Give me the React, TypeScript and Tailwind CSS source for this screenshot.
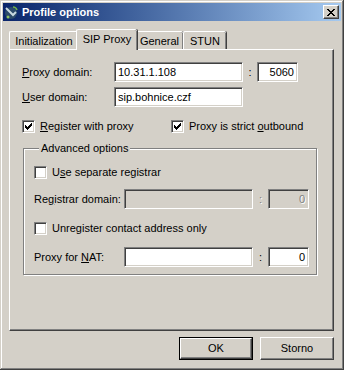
import React from "react";

const sunken =
  "border border-t-[#808080] border-l-[#808080] border-b-white border-r-white shadow-[inset_1px_1px_#404040,inset_-1px_-1px_#d4d0c8]";
const raised =
  "border border-t-white border-l-white border-b-[#404040] border-r-[#404040] shadow-[inset_-1px_-1px_#808080]";

const Check = ({ checked }: { checked: boolean }) => (
  <div className={`w-[13px] h-[13px] shrink-0 bg-white flex items-center justify-center ${sunken}`}>
    {checked && (
      <svg width="7" height="7" viewBox="0 0 7 7" shapeRendering="crispEdges">
        <path d="M0 2h1v3h-1zM1 3h1v3h-1zM2 4h1v3h-1zM3 3h1v3h-1zM4 2h1v3h-1zM5 1h1v3h-1zM6 0h1v3h-1z" fill="#000" />
      </svg>
    )}
  </div>
);

const Field = ({ value, w, right, disabled }: { value: string; w: string; right?: boolean; disabled?: boolean }) => (
  <div
    className={`${w} h-[20px] flex items-center px-[3px] ${sunken} ${disabled ? "bg-[#d4d0c8] text-[#808080] [text-shadow:1px_1px_0_#fff]" : "bg-white"} ${
      right ? "justify-end" : ""
    }`}
  >
    {value}
  </div>
);

const Colon = ({ w, disabled }: { w: string; disabled?: boolean }) => (
  <div className={`${w} text-center ${disabled ? "text-[#808080] [text-shadow:1px_1px_0_#fff]" : ""}`}>:</div>
);

const TitleIcon = () => (
  <svg width="16" height="16" viewBox="0 0 16 16">
    <circle cx="7" cy="9" r="6" fill="#2c4a6a" />
    <path d="M2 4 L9 11 L12 8" stroke="#c8d8e0" strokeWidth="2" fill="none" />
    <path d="M9 3 q3 0 4 3" stroke="#6fb04a" strokeWidth="1.5" fill="none" />
    <circle cx="4" cy="13" r="1.5" fill="#8fc060" />
  </svg>
);

const tabs = [
  { label: "Initialization", w: "w-[69px]" },
  { label: "SIP Proxy", w: "w-[61px]", active: true },
  { label: "General", w: "w-[48px]" },
  { label: "STUN", w: "w-[43px]" },
];

export default function App() {
  return (
    <div className="w-[344px] h-[370px] bg-[#d4d0c8] p-[3px] flex flex-col font-['Liberation_Sans',Arial,sans-serif] text-[11px] text-black leading-[13px] shadow-[inset_-1px_-1px_#404040,inset_1px_1px_#d4d0c8,inset_-2px_-2px_#808080,inset_2px_2px_#ffffff]">
      {/* title bar */}
      <div className="h-[18px] flex items-center pl-[1px] pr-[2px] bg-linear-to-r from-[#0a246a] to-[#a6caf0]">
        <TitleIcon />
        <span className="ml-[2px] font-bold text-white">Profile options</span>
        <div className={`ml-auto w-[16px] h-[14px] bg-[#d4d0c8] flex items-center justify-center ${raised}`}>
          <svg width="8" height="7" viewBox="0 0 8 7" shapeRendering="crispEdges">
            <path d="M0 0h2v1h-2zM6 0h2v1h-2zM1 1h2v1h-2zM5 1h2v1h-2zM2 2h4v1h-4zM3 3h2v1h-2zM2 4h4v1h-4zM1 5h2v1h-2zM5 5h2v1h-2zM0 6h2v1h-2zM6 6h2v1h-2z" fill="#000" />
          </svg>
        </div>
      </div>

      <div className="pt-[8px] pl-[6px] flex flex-col">
        {/* tab strip */}
        <div className="flex items-end h-[20px]">
          {tabs.map((t) =>
            t.active ? (
              <div
                key={t.label}
                className={`${t.w} -mx-[2px] h-[21px] -mb-[1px] relative z-10 bg-[#d4d0c8] border-t border-l border-white rounded-tl-[2px] rounded-tr-[2px] shadow-[1px_0_#404040,inset_-1px_0_#808080] flex items-start justify-center pt-[3px]`}
              >
                {t.label}
              </div>
            ) : (
              <div
                key={t.label}
                className={`${t.w} h-[18px] border-t border-l border-white rounded-tl-[2px] rounded-tr-[2px] shadow-[1px_0_#404040,inset_-1px_0_#808080] flex items-start justify-center pt-[3px]`}
              >
                {t.label}
              </div>
            )
          )}
        </div>

        {/* tab panel */}
        <div className="w-[325px] h-[282px] border border-t-white border-l-white border-b-[#404040] border-r-[#404040] shadow-[inset_-1px_-1px_#808080] pt-[12px] pl-[12px] flex flex-col">
          <div className="flex items-center h-[20px]">
            <div className="w-[92px]">
              <u>P</u>roxy domain:
            </div>
            <Field value="10.31.1.108" w="w-[129px]" />
            <Colon w="w-[14px]" />
            <Field value="5060" w="w-[41px]" right />
          </div>
          <div className="flex items-center h-[20px] mt-[5px]">
            <div className="w-[92px]">
              <u>U</u>ser domain:
            </div>
            <Field value="sip.bohnice.czf" w="w-[129px]" />
          </div>

          <div className="flex items-center h-[13px] mt-[13px]">
            <div className="w-[149px] flex items-center gap-[5px]">
              <Check checked />
              <span>
                <u>R</u>egister with proxy
              </span>
            </div>
            <div className="flex items-center gap-[5px]">
              <Check checked />
              <span>
                Proxy is strict <u>o</u>utbound
              </span>
            </div>
          </div>

          <fieldset className="mt-[9px] ml-[1px] w-[294px] border border-[#808080] shadow-[inset_1px_1px_#fff,1px_1px_#fff] pl-[10px] pb-[7px] flex flex-col">
            <legend className="ml-[5px] px-[2px] bg-[#d4d0c8] leading-[13px]">Advanced options</legend>
            <div className="flex items-center gap-[5px] h-[13px] mt-[11px]">
              <Check checked={false} />
              <span>
                U<u>s</u>e separate registrar
              </span>
            </div>
            <div className="flex items-center h-[20px] mt-[10px]">
              <div className="w-[90px]">
                Re<u>g</u>istrar domain:
              </div>
              <Field value="" w="w-[129px]" disabled />
              <Colon w="w-[15px]" disabled />
              <Field value="0" w="w-[41px]" right disabled />
            </div>
            <div className="flex items-center gap-[5px] h-[13px] mt-[13px]">
              <Check checked={false} />
              <span>Unregister contact address only</span>
            </div>
            <div className="flex items-center h-[20px] mt-[12px]">
              <div className="w-[90px]">
                Proxy for <u>N</u>AT:
              </div>
              <Field value="" w="w-[129px]" />
              <Colon w="w-[15px]" />
              <Field value="0" w="w-[41px]" right />
            </div>
          </fieldset>
        </div>

        {/* buttons */}
        <div className="w-[325px] flex justify-end gap-[7px] mt-[6px]">
          <div className="w-[74px] h-[23px] border border-black">
            <div className={`w-full h-full flex items-center justify-center ${raised}`}>OK</div>
          </div>
          <div className={`w-[74px] h-[23px] flex items-center justify-center ${raised}`}>Storno</div>
        </div>
      </div>
    </div>
  );
}
